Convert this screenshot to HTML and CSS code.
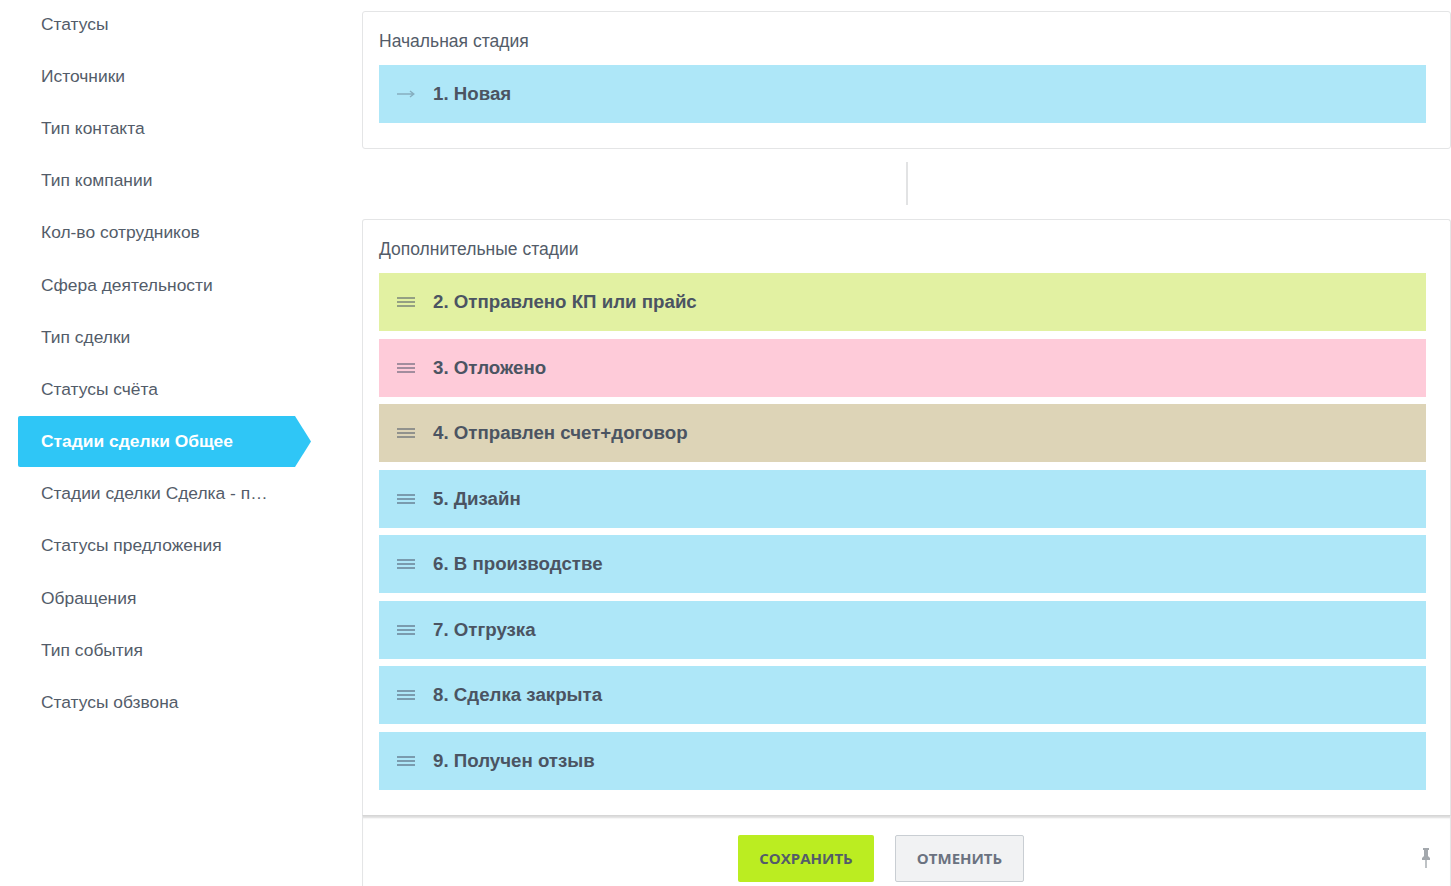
FILE: index.html
```html
<!DOCTYPE html>
<html lang="ru">
<head>
<meta charset="utf-8">
<title>Стадии сделки</title>
<link rel="stylesheet" href="styles.css">
</head>
<body>
<div class="layout">
  <nav class="sidebar">
    <ul class="menu">
      <li class="menu-item">Статусы</li>
      <li class="menu-item">Источники</li>
      <li class="menu-item">Тип контакта</li>
      <li class="menu-item">Тип компании</li>
      <li class="menu-item">Кол-во сотрудников</li>
      <li class="menu-item">Сфера деятельности</li>
      <li class="menu-item">Тип сделки</li>
      <li class="menu-item">Статусы счёта</li>
      <li class="menu-item active">Стадии сделки Общее</li>
      <li class="menu-item">Стадии сделки Сделка - п…</li>
      <li class="menu-item">Статусы предложения</li>
      <li class="menu-item">Обращения</li>
      <li class="menu-item">Тип события</li>
      <li class="menu-item">Статусы обзвона</li>
    </ul>
  </nav>
  <main class="main">
    <section class="card">
      <div class="card-title">Начальная стадия</div>
      <div class="stage stage-blue">
        <span class="stage-icon">
          <svg width="18" height="8" viewBox="0 0 18 8"><path d="M0 4H16.5M13 1L16.8 4L13 7" fill="none" stroke="#86aebf" stroke-width="1.4"/></svg>
        </span>
        <span class="stage-name">1. Новая</span>
      </div>
    </section>
    <div class="divider"><span class="divider-line"></span></div>
    <section class="card card-extra">
      <div class="card-title">Дополнительные стадии</div>
      <div class="stages">
        <div class="stage stage-green"><span class="stage-icon"><span class="handle"></span></span><span class="stage-name">2. Отправлено КП или прайс</span></div>
        <div class="stage stage-pink"><span class="stage-icon"><span class="handle"></span></span><span class="stage-name">3. Отложено</span></div>
        <div class="stage stage-tan"><span class="stage-icon"><span class="handle"></span></span><span class="stage-name">4. Отправлен счет+договор</span></div>
        <div class="stage stage-blue"><span class="stage-icon"><span class="handle"></span></span><span class="stage-name">5. Дизайн</span></div>
        <div class="stage stage-blue"><span class="stage-icon"><span class="handle"></span></span><span class="stage-name">6. В производстве</span></div>
        <div class="stage stage-blue"><span class="stage-icon"><span class="handle"></span></span><span class="stage-name">7. Отгрузка</span></div>
        <div class="stage stage-blue"><span class="stage-icon"><span class="handle"></span></span><span class="stage-name">8. Сделка закрыта</span></div>
        <div class="stage stage-blue"><span class="stage-icon"><span class="handle"></span></span><span class="stage-name">9. Получен отзыв</span></div>
      </div>
    </section>
    <footer class="footer">
      <button class="btn btn-save">Сохранить</button>
      <button class="btn btn-cancel">Отменить</button>
      <span class="pin">
        <svg width="12" height="20" viewBox="0 0 12 20"><path d="M3 0H9V2H8V8L10 10V12H2V10L4 8V2H3Z" fill="#a3a8ad"/><rect x="5.3" y="12" width="1.4" height="8" fill="#a3a8ad"/></svg>
      </span>
    </footer>
  </main>
</div>
</body>
</html>
```

FILE: styles.css
```css
* { box-sizing: border-box; }
html, body { margin: 0; padding: 0; background: #fff; }
body {
  font-family: "Liberation Sans", Arial, sans-serif;
  color: #535c69;
  overflow: hidden;
  height: 886px;
}
.layout { display: flex; align-items: flex-start; }
.sidebar { width: 362px; flex: none; }
.menu { list-style: none; margin: -2px 0 0 18px; padding: 0; }
.menu-item {
  height: 52.2px;
  display: flex;
  align-items: center;
  padding-left: 23px;
  font-size: 17.4px;
  color: #535c69;
  white-space: nowrap;
}
.menu-item.active {
  width: 293px;
  height: 51px;
  margin: 0.6px 0;
  background: #2fc6f6;
  color: #fff;
  font-weight: bold;
  clip-path: polygon(0 0, calc(100% - 16px) 0, 100% 50%, calc(100% - 16px) 100%, 0 100%);
  border-radius: 2px 0 0 2px;
}
.main { width: 1089px; flex: none; display: flex; flex-direction: column; }
.card {
  border: 1px solid #e4e5e6;
  border-radius: 3px;
  padding: 19px 24px 25px 16px;
}
.card:first-child { margin-top: 11px; }
.card-title { font-size: 17.5px; line-height: 20px; margin-bottom: 14px; color: #535c69; }
.stages { display: flex; flex-direction: column; gap: 7.5px; }
.stage {
  height: 58px;
  display: flex;
  align-items: center;
}
.stage-icon { width: 54px; padding-left: 18px; display: flex; align-items: center; }
.stage-name { font-size: 18.7px; font-weight: bold; color: #4b5462; }
.stage-blue { background: #aee7f8; }
.stage-green { background: #e2f1a2; }
.stage-pink { background: #fecbd9; }
.stage-tan { background: #ddd4b7; }
.handle {
  width: 18px; height: 10px;
  border-top: 2px solid rgba(70, 80, 100, 0.5);
  border-bottom: 2px solid rgba(70, 80, 100, 0.5);
  position: relative;
}
.handle::after {
  content: "";
  position: absolute; left: 0; right: 0; top: 2px;
  border-top: 2px solid rgba(70, 80, 100, 0.5);
}
.divider { height: 70px; display: flex; justify-content: center; padding-top: 13px; }
.divider-line { width: 2px; height: 43px; background: #e2e3e4; }
.card-extra { border-bottom: none; padding-bottom: 25px; border-radius: 3px 3px 0 0; }
.footer {
  height: 72px;
  border-left: 1px solid #e4e5e6;
  border-right: 1px solid #e4e5e6;
  box-shadow: inset 0 3px 2px -1px #dcdcdc;
  border-top: 1px solid #d6d6d6;
  display: flex;
  align-items: flex-start;
  padding: 19px 0 0 375px;
  gap: 21px;
  position: relative;
}
.btn {
  height: 47px;
  font-family: "Open Sans", "Liberation Sans", sans-serif;
  font-weight: bold;
  font-size: 15px;
  text-transform: uppercase;
  border-radius: 2px;
  cursor: pointer;
}
.btn-save { width: 136px; background: #bbed21; border: none; color: #535c69; }
.btn-cancel { width: 129px; background: #f1f2f3; border: 1px solid #c9ced3; color: #6b7280; }
.pin { position: absolute; right: 18px; top: 32px; display: flex; }
```
